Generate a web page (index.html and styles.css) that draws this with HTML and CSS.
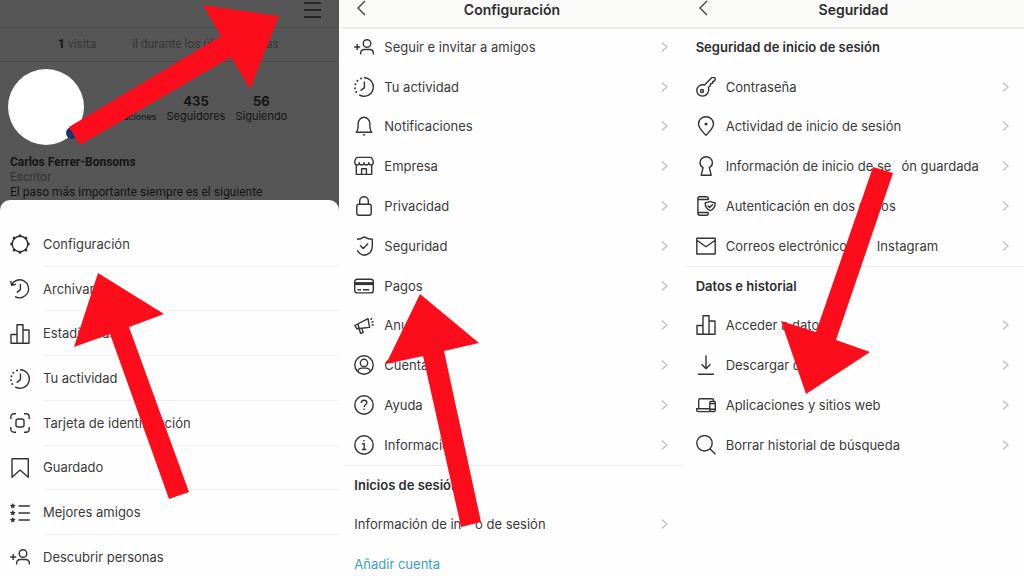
FILE: index.html
```html
<!DOCTYPE html>
<html lang="es">
<head>
	<meta charset="utf-8">
	<meta name="viewport" content="width=device-width, initial-scale=1.0">
	<title>Configuración</title>
	<link rel="stylesheet" href="styles.css">
</head>
<body>
<svg class="sprite">
	<symbol id="gear" viewBox="0 0 20 20">
		<circle cx="10" cy="10" r="7.8"/>
		<g class="solid"><circle cx="10" cy="1.7" r="1.5"/><circle cx="15.9" cy="4.1" r="1.5"/><circle cx="18.3" cy="10" r="1.5"/><circle cx="15.9" cy="15.9" r="1.5"/><circle cx="10" cy="18.3" r="1.5"/><circle cx="4.1" cy="15.9" r="1.5"/><circle cx="1.7" cy="10" r="1.5"/><circle cx="4.1" cy="4.1" r="1.5"/></g>
	</symbol>
	<symbol id="archive" viewBox="0 0 20 20"><path d="M1.6 5.6A9 9 0 1 1 5 17.6M.7 1.8l.9 4.4 4.4-1M10.4 5v5.6l-3.6 3"/></symbol>
	<symbol id="stats" viewBox="0 0 20 20"><path d="M1 10.5h6v8.8H1zM7 .8h6v18.5H7zM13 6h6v13.3h-6z"/></symbol>
	<symbol id="activity" viewBox="0 0 20 20"><path d="M10 .8a9.2 9.2 0 1 1-4.8 17M10.4 4.6v6l-3.8 3"/><path class="dots" d="M7 1.4h.01M3.4 3.8h.01M1.4 7.3h.01M.9 11.2h.01M2.2 15h.01"/></symbol>
	<symbol id="tag" viewBox="0 0 20 20"><path d="M.8 6V4A3.2 3.2 0 0 1 4 .8h2M14 .8h2A3.2 3.2 0 0 1 19.2 4v2M19.2 14v2a3.2 3.2 0 0 1-3.2 3.2h-2M6 19.2H4A3.2 3.2 0 0 1 .8 16v-2"/><rect x="6" y="6" width="8" height="8" rx="2"/></symbol>
	<symbol id="saved" viewBox="0 0 20 20"><path d="M2 .8h16.3v18.4L10.1 12 2 19.2z"/></symbol>
	<symbol id="friends" viewBox="0 0 20 20">
		<path d="M8.5 3h11.3M8.5 10h11.3M8.5 17h11.3"/>
		<g class="solid"><path id="star" d="M2.8 0l.9 1.800 2 .3-1.500 1.400.4 2-1.800-1-1.800 1 .4-2L-.1 2.100l2-.3z"/><use href="#star" y="7"/><use href="#star" y="14"/></g>
	</symbol>
	<symbol id="person" viewBox="0 0 20 20"><circle cx="13" cy="6.5" r="3.8"/><path d="M6.600 17.500v-1c0-2.600 1.700-4 4-4h4.800c2.300 0 4 1.400 4 4v1M.2 10h6M3.200 7v6"/></symbol>
	<symbol id="bell" viewBox="0 0 20 20"><path d="M2.200 16.300c1.600-1.400 1.900-3 1.900-5.800V8a5.900 6.700 0 0 1 11.800 0v2.500c0 2.800.3 4.400 1.900 5.800zM8.800 18.900h2.400"/></symbol>
	<symbol id="shop" viewBox="0 0 20 20"><path d="M4 1.400h12c2 0 3 2.300 3.300 5.200 0 1.500-1 2.400-2.300 2.400s-2.300-1-2.300-2.300c0 1.300-1 2.300-2.300 2.300S10 8 10 6.700C10 8 8.900 9 7.600 9S5.300 8 5.300 6.700C5.300 8 4.300 9 3 9S.7 8.100.7 6.600C1 3.700 2 1.400 4 1.400zM2.300 9v9.400h15.400V9M7.600 18.400v-5.600h4.800v5.600"/></symbol>
	<symbol id="lock" viewBox="0 0 20 20"><rect x="2.800" y="8.300" width="14.400" height="11" rx="2"/><path d="M5.700 8.300V5a4.300 4.300 0 0 1 8.600 0v3.300"/></symbol>
	<symbol id="shield" viewBox="0 0 20 20"><path d="M3 3.200C6 3.200 8 2.200 10.300.8c2.400 1.500 4.700 2.400 8 2.400v7c0 5-3.300 8-8 9.100-3.500-.8-5.800-2.500-7-5M6 9.300l3.200 3.300 5-5.200"/></symbol>
	<symbol id="card" viewBox="0 0 20 20"><rect x=".7" y="3.300" width="18.600" height="13.600" rx="2.400"/><path d="M3.500 13.800h3.600M9 13.800h6.200"/><path class="thick" d="M.7 7.600h18.600"/></symbol>
	<symbol id="ads" viewBox="0 0 20 20"><path d="M.8 10.500L14 3.600l1.600 8.800-12.800 1.300zM5.200 13.700l1.300 4.600 2.600-.7-1.100-4.200M16.700 5l1-1.800M17.500 7.400l2-.8M17.600 9.700l2 .3M3.900 9.200l1.200 4.300"/></symbol>
	<symbol id="account" viewBox="0 0 20 20"><circle cx="10" cy="10" r="9.200"/><circle cx="10" cy="8" r="3.700"/><path d="M3.800 16.500c.5-2.300 1.900-3.400 4-3.400h4.400c2.100 0 3.500 1.100 4 3.400"/></symbol>
	<symbol id="help" viewBox="0 0 20 20"><circle cx="10" cy="10" r="9.200"/><path d="M7.200 8c0-1.800 1.200-2.800 2.800-2.800s2.800 1 2.800 2.500c0 2-2.700 2-2.700 4.200M10.100 13.600v1.500"/></symbol>
	<symbol id="info" viewBox="0 0 20 20"><circle cx="10" cy="10" r="9.200"/><path d="M8 8.700h2.200v5.600M7.800 14.500h4.500M9.900 5v1.600"/></symbol>
	<symbol id="key" viewBox="0 0 20 20"><path d="M8.500 8L15.400.9c1-.7 2.600-.6 3.500.1.500 1 .2 2.300-.4 3l-1.700.5-.3 1.800-1.800.4-.3 1.800-1.900 1.800c1 4-1.200 8.800-6 8.800A5.600 5.600 0 0 1 .8 13.500C.8 10 4.400 7 8.500 8z"/><circle cx="6" cy="14" r="1.500"/></symbol>
	<symbol id="pin" viewBox="0 0 20 20"><path d="M10 19.300C6.500 15.300 2.500 12.200 2.500 8a7.500 7.300 0 0 1 15 0c0 4.200-4 7.300-7.500 11.300z"/><circle class="solid" cx="10" cy="8" r="1.500"/></symbol>
	<symbol id="keyhole" viewBox="0 0 20 20"><path d="M5.200 19.200l1.900-7.600C5 10.600 4 8.800 4 6.700a6.200 5.900 0 0 1 12.400 0c0 2.100-1.100 3.900-3.100 4.900l1.900 7.600z"/></symbol>
	<symbol id="twofactor" viewBox="0 0 20 20"><path d="M12.300 4V2.700c0-1.200-.6-1.900-1.800-1.900H3.700C2.500.8 1.900 1.500 1.900 2.700v14.600c0 1.200.6 1.900 1.800 1.900h6.800c1.200 0 1.800-.7 1.800-1.900v-1M1.900 3.500h10.400M1.900 16.500h10.400M9.200 6.800c2 0 3.400-.5 5-1.400 1.600.9 3 1.400 5 1.400 0 4-1.300 6.500-5 7.900-3.700-1.400-5-3.900-5-7.900zM11.700 9.600l2 2 3.200-3.300"/></symbol>
	<symbol id="mail" viewBox="0 0 20 20"><path d="M.8 2.200h18.400v15.800H.8zM.8 4.300l9.200 6.500 9.200-6.500"/></symbol>
	<symbol id="download" viewBox="0 0 20 20"><path d="M10 .6v13M5.600 9.300L10 13.700l4.400-4.400M2 19.300h16"/></symbol>
	<symbol id="devices" viewBox="0 0 20 20"><path d="M2.700 13.700V5.200c0-.9.500-1.400 1.400-1.400h12c.9 0 1.400.5 1.400 1.400v1M13.500 13.700H.7v1.500c0 .9.500 1.400 1.400 1.400h12"/><rect x="13.800" y="6.500" width="5.500" height="10" rx="1.200"/><path d="M13.800 8.600h5.500M13.800 14.200h5.500"/></symbol>
	<symbol id="search" viewBox="0 0 20 20"><circle cx="8.500" cy="8.300" r="7.700"/><path d="M14 13.800l5.400 5.400"/></symbol>
	<symbol id="next" viewBox="0 0 7 10"><path d="M1 .6L6 5 1 9.400"/></symbol>
	<symbol id="back" viewBox="0 0 10 16"><path d="M9 1L2 8l7 7"/></symbol>
</svg>

<main class="screens">
	<section class="screen profile">
		<div class="topbar">
			<button class="burger" aria-label="Menú"><span></span><span></span><span></span></button>
		</div>
		<p class="visits"><span><b>1</b> visita</span><span>il durante los últimos 7 días</span></p>
		<div class="summary">
			<div class="avatar"><i class="badge"></i></div>
			<div class="stat small"><b>&nbsp;</b><span class="gap">Public</span>aciones</div>
			<div class="stat"><b>435</b>Seguidores</div>
			<div class="stat"><b>56</b>Siguiendo</div>
		</div>
		<div class="bio">
			<b>Carlos Ferrer-Bonsoms</b>
			<span class="job">Escritor</span>
			<span>El paso más importante siempre es el siguiente</span>
		</div>
		<nav class="sheet">
			<a href="#"><svg class="icon"><use href="#gear"/></svg><span>Configuración</span></a>
			<a href="#"><svg class="icon"><use href="#archive"/></svg><span>Archivar</span></a>
			<a href="#"><svg class="icon"><use href="#stats"/></svg><span>Estadísticas</span></a>
			<a href="#"><svg class="icon"><use href="#activity"/></svg><span>Tu actividad</span></a>
			<a href="#"><svg class="icon"><use href="#tag"/></svg><span>Tarjeta de identificación</span></a>
			<a href="#"><svg class="icon"><use href="#saved"/></svg><span>Guardado</span></a>
			<a href="#"><svg class="icon"><use href="#friends"/></svg><span>Mejores amigos</span></a>
			<a href="#"><svg class="icon"><use href="#person"/></svg><span>Descubrir personas</span></a>
		</nav>
	</section>

	<section class="screen">
		<header class="header">
			<button class="back" aria-label="Atrás"><svg><use href="#back"/></svg></button>
			<h1>Configuración</h1>
		</header>
		<nav class="menu">
			<a href="#"><svg class="icon"><use href="#person"/></svg>Seguir e invitar a amigos<svg class="next"><use href="#next"/></svg></a>
			<a href="#"><svg class="icon"><use href="#activity"/></svg>Tu actividad<svg class="next"><use href="#next"/></svg></a>
			<a href="#"><svg class="icon"><use href="#bell"/></svg>Notificaciones<svg class="next"><use href="#next"/></svg></a>
			<a href="#"><svg class="icon"><use href="#shop"/></svg>Empresa<svg class="next"><use href="#next"/></svg></a>
			<a href="#"><svg class="icon"><use href="#lock"/></svg>Privacidad<svg class="next"><use href="#next"/></svg></a>
			<a href="#"><svg class="icon"><use href="#shield"/></svg>Seguridad<svg class="next"><use href="#next"/></svg></a>
			<a href="#"><svg class="icon"><use href="#card"/></svg>Pagos<svg class="next"><use href="#next"/></svg></a>
			<a href="#"><svg class="icon"><use href="#ads"/></svg>Anuncios<svg class="next"><use href="#next"/></svg></a>
			<a href="#"><svg class="icon"><use href="#account"/></svg>Cuenta<svg class="next"><use href="#next"/></svg></a>
			<a href="#"><svg class="icon"><use href="#help"/></svg>Ayuda<svg class="next"><use href="#next"/></svg></a>
			<a href="#"><svg class="icon"><use href="#info"/></svg>Información<svg class="next"><use href="#next"/></svg></a>
			<h2 class="line">Inicios de sesión</h2>
			<a href="#"><span>Información de in<span class="gap">ici</span>o de sesión</span><svg class="next"><use href="#next"/></svg></a>
			<a href="#" class="add">Añadir cuenta</a>
		</nav>
	</section>

	<section class="screen">
		<header class="header">
			<button class="back" aria-label="Atrás"><svg><use href="#back"/></svg></button>
			<h1>Seguridad</h1>
		</header>
		<nav class="menu">
			<h2>Seguridad de inicio de sesión</h2>
			<a href="#"><svg class="icon"><use href="#key"/></svg>Contraseña<svg class="next"><use href="#next"/></svg></a>
			<a href="#"><svg class="icon"><use href="#pin"/></svg>Actividad de inicio de sesión<svg class="next"><use href="#next"/></svg></a>
			<a href="#"><svg class="icon"><use href="#keyhole"/></svg><span>Información de inicio de se<span class="gap">si</span>ón guardada</span><svg class="next"><use href="#next"/></svg></a>
			<a href="#"><svg class="icon"><use href="#twofactor"/></svg>Autenticación en dos pasos<svg class="next"><use href="#next"/></svg></a>
			<a href="#"><svg class="icon"><use href="#mail"/></svg><span>Correos electrónicos <span class="gap">de</span> Instagram</span><svg class="next"><use href="#next"/></svg></a>
			<h2 class="line">Datos e historial</h2>
			<a href="#"><svg class="icon"><use href="#stats"/></svg>Acceder a datos<svg class="next"><use href="#next"/></svg></a>
			<a href="#"><svg class="icon"><use href="#download"/></svg>Descargar datos<svg class="next"><use href="#next"/></svg></a>
			<a href="#"><svg class="icon"><use href="#devices"/></svg>Aplicaciones y sitios web<svg class="next"><use href="#next"/></svg></a>
			<a href="#"><svg class="icon"><use href="#search"/></svg>Borrar historial de búsqueda<svg class="next"><use href="#next"/></svg></a>
		</nav>
	</section>

	<svg class="arrows" viewBox="0 0 1024 576" preserveAspectRatio="none">
		<polygon points="279,16 203,5 221,36 69,127 80,145 231,57 250,89"/>
		<polygon points="98,273 164,314 129,327 189,492 169,499 110,334 74,347"/>
		<polygon points="420,294 479,343 444,351 481,522 461,527 423,356 386,364"/>
		<polygon points="806,394 781,321 816,332 873,167 893,173 836,340 870,352"/>
	</svg>
</main>
</body>
</html>
```
FILE: styles.css
```css
*{
	box-sizing:border-box;
}
body{
	margin:0;
	font:13px/16px Inter, "Liberation Sans", sans-serif;
	color:#3a3a3a;
	background:#fefefe;
}
h1, h2, p{
	margin:0;
}
a{
	color:inherit;
	text-decoration:none;
}
button{
	padding:0;
	border:none;
	background:none;
	cursor:pointer;
}
svg{
	fill:none;
	stroke:currentColor;
	flex:none;
}
.sprite{
	position:absolute;
	width:0;
	height:0;
}
.solid{
	fill:currentColor;
	stroke:none;
}
.dots{
	stroke-width:2;
	stroke-linecap:round;
}
.thick{
	stroke-width:3;
}
.icon{
	width:20px;
	height:20px;
	stroke-width:1.4;
	stroke-linejoin:round;
	color:#333;
}

.screens{
	position:relative;
	display:grid;
	grid-template-columns:repeat(3, 1fr);
	height:100vh;
	min-height:560px;
	overflow:hidden;
}
.screen{
	display:flex;
	flex-direction:column;
	min-width:0;
}

/* profile */
.profile{
	background:#565656;
	border-right:2px solid #fefefe;
	color:#151515;
}
.topbar{
	display:flex;
	justify-content:flex-end;
	height:28px;
	padding:2px 18px 0 0;
	border-bottom:1px solid #4d4d4d;
}
.burger{
	display:flex;
	flex-direction:column;
	gap:5px;
	width:17px;
	height:16px;
}
.burger span{
	width:100%;
	height:2px;
	background:#262626;
}
.visits{
	display:flex;
	gap:36px;
	padding:8px 0 9px 58px;
	border-bottom:1px solid #4d4d4d;
	font-family:Roboto, sans-serif;
	font-size:12px;
	color:#383838;
	white-space:nowrap;
}
.visits b{
	color:#151515;
}
.summary{
	display:flex;
	align-items:center;
	justify-content:flex-end;
	gap:10px;
	padding:7px 52px 8px 8px;
	font-size:11px;
	line-height:15px;
	text-align:center;
}
.avatar{
	position:relative;
	flex:none;
	width:76px;
	height:76px;
	margin-right:auto;
	border-radius:50%;
	background:#fff;
}
.badge{
	position:absolute;
	right:6px;
	bottom:6px;
	width:12px;
	height:12px;
	border-radius:50%;
	background:#1d3468;
}
.stat{
	padding-top:3px;
}
.stat b{
	display:block;
	font-size:13px;
}
.small{
	font-size:9px;
}
.bio{
	display:flex;
	flex-direction:column;
	padding:2px 10px 0;
	font-family:Roboto, sans-serif;
	font-size:12px;
	line-height:15px;
}
.job{
	color:#353535;
}
.sheet{
	flex:1;
	display:grid;
	grid-template-rows:repeat(7, 12fr) 11fr;
	padding-top:22px;
	border-radius:10px 10px 0 0;
	background:#fefefe;
	color:#3a3a3a;
}
.sheet a{
	display:flex;
	align-items:center;
	gap:13px;
	padding-left:10px;
}
.sheet span{
	flex:1;
	display:flex;
	align-items:center;
	align-self:stretch;
	border-bottom:1px solid #f1f1f1;
}
.sheet a:last-child{
	padding-top:3px;
}
.sheet a:last-child span{
	border-bottom:none;
}

/* settings */
.header{
	display:grid;
	grid-template-columns:1fr auto 1fr;
	height:27px;
	padding-left:15px;
	padding-right:15px;
	background:#fafaf9;
	box-shadow:0 2px 0 #ebebeb;
}
.header h1{
	font-size:14px;
	line-height:19px;
	font-weight:600;
	color:#2d2d2d;
}
.back{
	justify-self:start;
	align-self:start;
	width:10px;
	height:16px;
	color:#444;
}
.back svg{
	display:block;
	width:10px;
	height:16px;
	stroke-width:1.4;
}
.menu{
	flex:1;
	display:grid;
	grid-template-rows:repeat(13, 5fr) 4fr;
}
.menu a{
	display:flex;
	align-items:center;
	gap:10px;
	padding:0 15px 0 13px;
	white-space:nowrap;
}
.menu h2{
	display:flex;
	align-items:center;
	margin-left:3px;
	padding-left:10px;
	font-size:13px;
	font-weight:600;
	color:#2d2d2d;
}
.menu .line{
	border-top:1px solid #eee;
}
.menu .add{
	padding-top:8px;
	color:#3a9fc4;
}
.next{
	width:7px;
	height:10px;
	margin-left:auto;
	stroke-width:1.4;
	color:#c4c4c4;
}
.gap{
	visibility:hidden;
}

/* red pointers */
.arrows{
	position:absolute;
	inset:0;
	width:100%;
	height:100%;
	fill:#fd0d1b;
	stroke:none;
	pointer-events:none;
}
```
